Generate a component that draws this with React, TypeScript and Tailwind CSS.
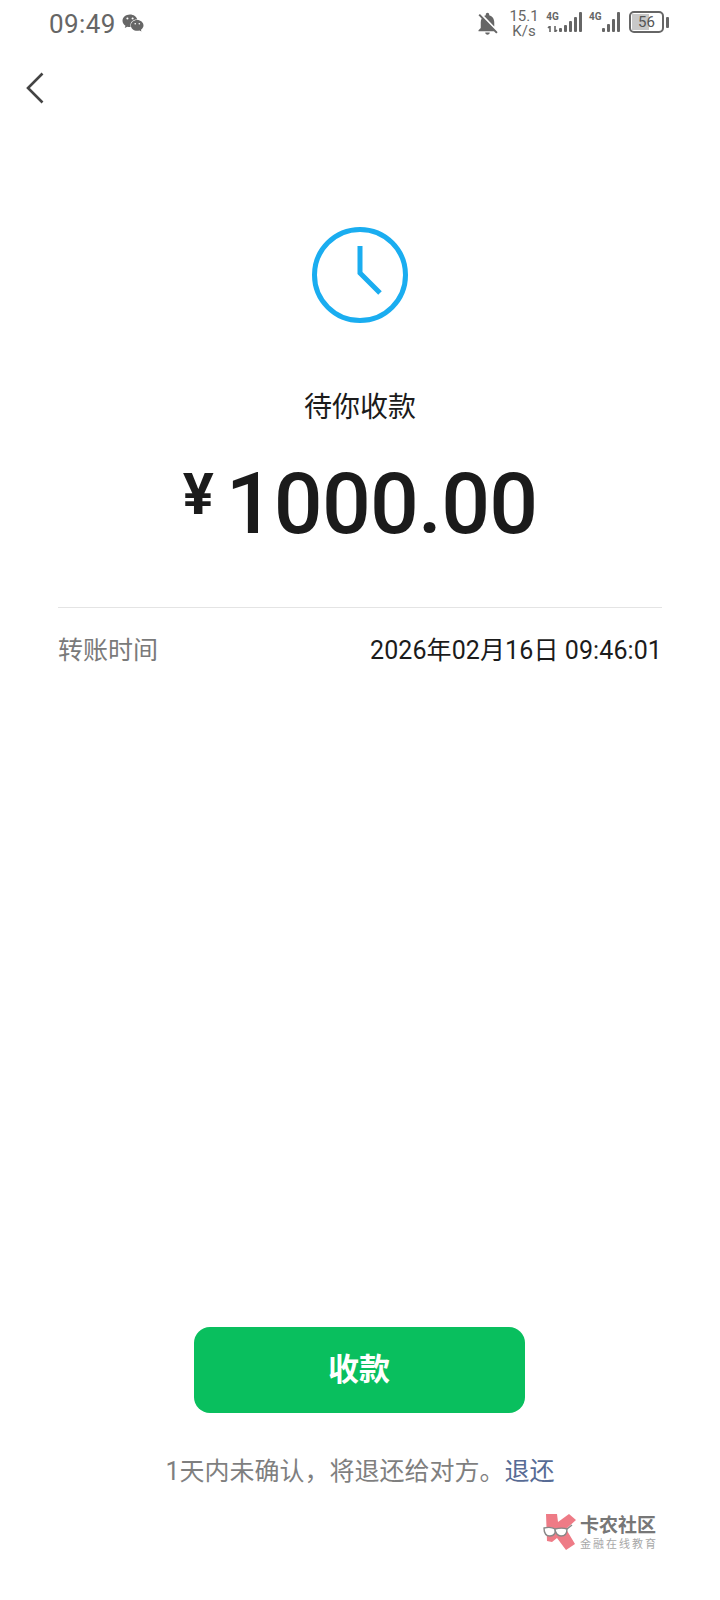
import React from 'react';
import { FaWeixin } from 'react-icons/fa';
import { MdNotificationsOff } from 'react-icons/md';

const cjk = { fontFamily: 'Roboto, "Noto Sans CJK SC", sans-serif' };

function SignalBars({ heights }: { heights: number[] }) {
  return (
    <div className="flex items-end gap-[2px] h-[21px]">
      {heights.map((h, i) => (
        <div key={i} className="w-[3px] bg-[#666666] rounded-[1px]" style={{ height: h }} />
      ))}
    </div>
  );
}

function StatusBar() {
  return (
    <div className="h-[48px] flex items-start justify-between pl-[49px] pr-[51px] pt-[9px] text-[#666666]">
      <div className="flex items-center">
        <span className="text-[26px] leading-[30px] tracking-[0.4px]">09:49</span>
        <FaWeixin className="ml-[6px] -mt-[3px] text-[#666666]" size={22} />
      </div>
      <div className="flex items-start">
        <MdNotificationsOff className="mt-[1px]" size={27} />
        <div className="ml-[8px] w-[30px] flex flex-col items-center text-[15px] leading-[15px]">
          <span>15.1</span>
          <span>K/s</span>
        </div>
        <div className="ml-[7px] flex items-start mt-[2px]">
          <div className="flex flex-col w-[13px] items-center">
            <span className="text-[10px] leading-[12px] font-bold">4G</span>
            <svg width="12" height="6" viewBox="0 0 12 6" className="mt-[3px]">
              <path d="M3 0v6M3 0L1 2M8 6V0M8 6l2-2" stroke="#666666" strokeWidth="1.6" fill="none" />
            </svg>
          </div>
          <SignalBars heights={[4, 7, 11, 15, 20]} />
        </div>
        <div className="ml-[7px] flex items-start mt-[2px]">
          <span className="text-[10px] leading-[12px] font-bold w-[13px]">4G</span>
          <SignalBars heights={[4, 8, 13, 20]} />
        </div>
        <div className="ml-[9px] mt-[2px] flex items-center">
          <div className="relative w-[35px] h-[22px] border-2 border-[#666666] rounded-[5px] overflow-hidden flex items-center justify-center">
            <div className="absolute left-[1px] top-[1px] bottom-[1px] w-[17px] bg-[#c8c8c8]" />
            <span className="relative text-[15px] leading-none text-[#555555]">56</span>
          </div>
          <div className="ml-[2px] w-[3px] h-[11px] bg-[#666666] rounded-[1px]" />
        </div>
      </div>
    </div>
  );
}

function WatermarkLogo() {
  return (
    <svg width="36" height="38" viewBox="0 0 36 38">
      <path d="M4 1h11l1 8 11-8 7 6-10 9 9 15-9 6-9-12-5 4-5-1z" fill="#ee7b86" />
      <path d="M2 15c4-1 8-1 11 1 1 4-1 7-5 7-4 0-6-3-6-8z" fill="#ffffff" stroke="#888888" strokeWidth="1.4" />
      <path d="M13 16c4-1 9-1 12 0 0 4-2 7-6 7-3 0-6-3-6-7z" fill="#ffffff" stroke="#888888" strokeWidth="1.4" />
      <path d="M25 16l5-4" stroke="#888888" strokeWidth="1.4" />
    </svg>
  );
}

export default function App() {
  return (
    <div className="relative w-[720px] h-[1600px] bg-white flex flex-col overflow-hidden" style={cjk}>
      <StatusBar />

      {/* back */}
      <div className="pl-[26px] pt-[24px]">
        <svg width="18" height="32" viewBox="0 0 18 32" fill="none">
          <path d="M16.5 1.5L2 16l14.5 14.5" stroke="#444444" strokeWidth="2.6" />
        </svg>
      </div>

      <div className="flex flex-col items-center mt-[122px]">
        <svg width="98" height="98" viewBox="0 0 98 98" fill="none">
          <circle cx="49" cy="49" r="45.5" stroke="#1AADF0" strokeWidth="5" />
          <path d="M49 20v27l20 20" stroke="#1AADF0" strokeWidth="5" />
        </svg>
        <div className="mt-[64px] text-[28px] leading-[40px] text-[#1b1b1b]">待你收款</div>
        <div className="mt-[30px] flex items-start text-[#1b1b1b] leading-none">
          <span className="mt-[3px] text-[58px] font-bold leading-[66px] mr-[12px]">¥</span>
          <span className="text-[86px] font-medium leading-[92px] tracking-[-0.8px]">1000.00</span>
        </div>
      </div>

      <div className="mx-[58px] mt-[57px] border-t border-[#e4e4e4] pt-[25px] flex items-center justify-between">
        <span className="text-[25px] leading-[36px] text-[#7a7a7a]">转账时间</span>
        <span className="text-[25px] leading-[36px] tracking-[0.1px] text-[#1b1b1b]">2026年02月16日 09:46:01</span>
      </div>

      <div className="mt-auto flex flex-col items-center pb-[110px]">
        <button className="mr-[2px] w-[331px] h-[86px] rounded-[16px] bg-[#09BF5E] text-white text-[31px] font-bold">
          收款
        </button>
        <div className="mt-[41px] text-[25px] leading-[36px] text-[#7f7f7f]">
          1天内未确认，将退还给对方。<span className="text-[#576B95]">退还</span>
        </div>
      </div>

      {/* watermark */}
      <div className="absolute left-[542px] top-[1513px] flex items-start gap-[2px]">
        <WatermarkLogo />
        <div className="flex flex-col mt-[2px]">
          <span className="text-[19px] leading-[22px] font-bold text-[#777777] whitespace-nowrap">卡农社区</span>
          <span className="mt-[1px] text-[11px] leading-[14px] tracking-[2px] text-[#a8a8a8] whitespace-nowrap">金融在线教育</span>
        </div>
      </div>
    </div>
  );
}
